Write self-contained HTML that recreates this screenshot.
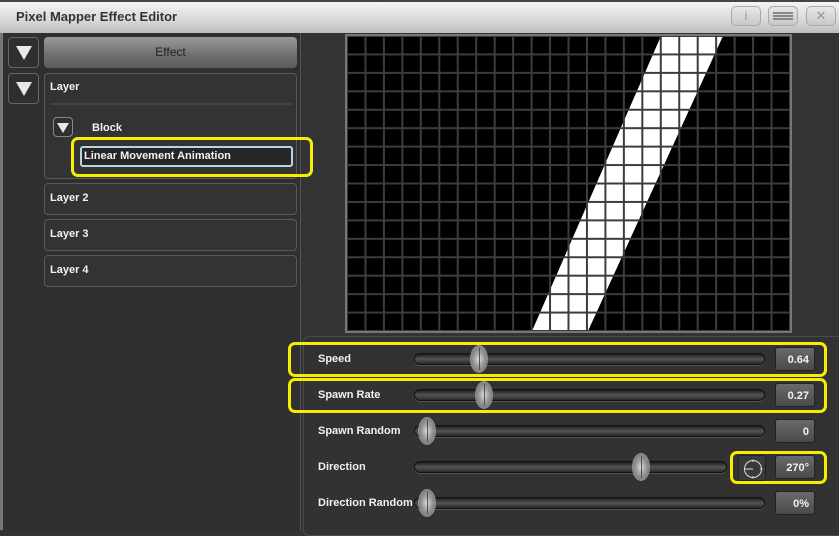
<!DOCTYPE html>
<html><head><meta charset="utf-8"><style>
*{margin:0;padding:0;box-sizing:border-box}
body{width:839px;height:530px;overflow:hidden;background:#333;font-family:"Liberation Sans",sans-serif;position:relative}
.a{position:absolute}
.t{color:#f2f2f2;font-size:11px;font-weight:bold;position:absolute}
.btn{position:absolute;border:1px solid #666;border-radius:4px;background:#2f2f2f}
.tri{position:absolute;width:0;height:0;border-left:8px solid transparent;border-right:8px solid transparent;border-top:14px solid #e8e8e8}
.panel{position:absolute;border:1px solid #5a5a5a;border-radius:4px;background:#333}
.yel{position:absolute;border:3px solid #f5ee00;border-radius:7px}
.track{position:absolute;height:12px;border-radius:6px;border:1px solid #111;background:linear-gradient(#1a1a1a,#555 50%,#2a2a2a);box-shadow:0 1px 0 #555}
.knob{position:absolute;width:18px;height:28px;border-radius:50%;background:radial-gradient(ellipse at center,#eee 0%,#aaa 40%,#666 100%);border:1px solid #999;opacity:.9}
.knob:after{content:"";position:absolute;left:8px;top:2px;width:1px;height:22px;background:#555}
.val{position:absolute;width:40px;height:24px;border-radius:3px;background:linear-gradient(#6a6a6a,#4a4a4a);border:1px solid #222;color:#f2f2f2;font-size:11px;font-weight:bold;text-align:right;padding:6px 5px 0 0}
.tb{position:absolute;top:6px;height:20px;width:30px;border:1px solid #aaa;border-radius:5px;background:linear-gradient(#e8e8e8,#c8c8c8);color:#999;text-align:center;font-size:13px;line-height:18px}
</style></head><body>
<!-- title bar -->
<div class="a" style="left:0;top:0;width:839px;height:33px;background:linear-gradient(#f4f4f4,#d8d8d8 60%,#bdbdbd);border-top:2px solid #444"></div>
<div class="a" style="left:16px;top:9px;font-size:13px;font-weight:bold;color:#333">Pixel Mapper Effect Editor</div>
<div class="tb" style="left:731px">i</div>
<div class="tb" style="left:768px"><div style="margin:5px auto 0;width:20px;height:8px;border-top:2px solid #888;border-bottom:2px solid #888;position:relative"><div style="position:absolute;top:1px;left:0;width:20px;height:2px;background:#888"></div></div></div>
<div class="tb" style="left:806px">✕</div>
<!-- left panel -->
<div class="a" style="left:0;top:33px;width:3px;height:497px;background:#777"></div>
<div class="a" style="left:3px;top:33px;width:298px;height:497px;background:#303030;border-right:1px solid #555"></div>
<div class="btn" style="left:8px;top:37px;width:31px;height:31px"><div class="tri" style="left:7px;top:8px"></div></div>
<div class="btn" style="left:8px;top:73px;width:31px;height:31px"><div class="tri" style="left:7px;top:8px"></div></div>
<div class="a" style="left:44px;top:37px;width:253px;height:31px;border-radius:4px;background:linear-gradient(#9a9a9a,#6e6e6e 60%,#5c5c5c);color:#222;font-size:12px;text-align:center;line-height:31px">Effect</div>
<div class="panel" style="left:44px;top:73px;width:253px;height:106px"></div>
<div class="t" style="left:50px;top:81px">Layer</div>
<div class="a" style="left:50px;top:103px;width:242px;height:2px;background:#444"></div>
<div class="btn" style="left:53px;top:117px;width:20px;height:20px;border-color:#888"><div class="tri" style="left:3px;top:5px;border-left-width:6px;border-right-width:6px;border-top-width:10px"></div></div>
<div class="t" style="left:92px;top:122px">Block</div>
<div class="a" style="left:80px;top:146px;width:213px;height:21px;border:2px solid #b8d4e0;border-radius:3px;background:#262626"></div>
<div class="t" style="left:84px;top:150px">Linear Movement Animation</div>
<div class="yel" style="left:71px;top:137px;width:242px;height:40px"></div>
<div class="panel" style="left:44px;top:183px;width:253px;height:32px"></div><div class="t" style="left:50px;top:192px">Layer 2</div>
<div class="panel" style="left:44px;top:219px;width:253px;height:32px"></div><div class="t" style="left:50px;top:228px">Layer 3</div>
<div class="panel" style="left:44px;top:255px;width:253px;height:32px"></div><div class="t" style="left:50px;top:264px">Layer 4</div>
<!-- grid -->
<svg class="a" style="left:345px;top:34px" width="447" height="299">
<defs><pattern id="g" x="2" y="2" width="18.458" height="18.4375" patternUnits="userSpaceOnUse"><rect width="18.458" height="18.4375" fill="none" stroke="#3c3c3c" stroke-width="2"/></pattern></defs>
<rect x="2" y="2" width="443" height="295" fill="#000"/>
<polygon points="316,2 378,2 243,297 187,297" fill="#fff"/>
<rect x="2" y="2" width="443" height="295" fill="url(#g)"/>
<rect x="1" y="1" width="445" height="297" fill="none" stroke="#777" stroke-width="2"/>
</svg>
<!-- bottom panel -->
<div class="a" style="left:303px;top:336px;width:540px;height:200px;border:1px solid #4a4a4a;border-radius:6px;background:#323232"></div>
<div class="t" style="left:318px;top:353px">Speed</div>
<div class="track" style="left:414px;top:353px;width:351px"></div><div class="knob" style="left:470px;top:345px"></div>
<div class="val" style="left:775px;top:347px">0.64</div>
<div class="yel" style="left:288px;top:342px;width:539px;height:35px"></div>
<div class="t" style="left:318px;top:389px">Spawn Rate</div>
<div class="track" style="left:414px;top:389px;width:351px"></div><div class="knob" style="left:475px;top:381px"></div>
<div class="val" style="left:775px;top:383px">0.27</div>
<div class="yel" style="left:288px;top:378px;width:539px;height:35px"></div>
<div class="t" style="left:318px;top:425px">Spawn Random</div>
<div class="track" style="left:414px;top:425px;width:351px"></div><div class="knob" style="left:418px;top:417px"></div>
<div class="val" style="left:775px;top:419px">0</div>
<div class="t" style="left:318px;top:461px">Direction</div>
<div class="track" style="left:414px;top:461px;width:313px"></div><div class="knob" style="left:632px;top:453px"></div>
<div class="a" style="left:738px;top:455px;width:28px;height:26px;border-radius:3px;background:#3a3a3a;border:1px solid #222"><svg width="28" height="26"><circle cx="14" cy="13" r="8.5" fill="none" stroke="#ddd" stroke-width="1"/><line x1="6" y1="13" x2="14" y2="13" stroke="#ddd"/><line x1="14" y1="3.5" x2="14" y2="6" stroke="#ddd"/><line x1="14" y1="20" x2="14" y2="22.5" stroke="#ddd"/><line x1="21" y1="13" x2="23.5" y2="13" stroke="#ddd"/></svg></div>
<div class="val" style="left:775px;top:455px">270°</div>
<div class="yel" style="left:730px;top:451px;width:97px;height:33px"></div>
<div class="t" style="left:318px;top:497px">Direction Random</div>
<div class="track" style="left:414px;top:497px;width:351px"></div><div class="knob" style="left:418px;top:489px"></div>
<div class="val" style="left:775px;top:491px">0%</div>
</body></html>
